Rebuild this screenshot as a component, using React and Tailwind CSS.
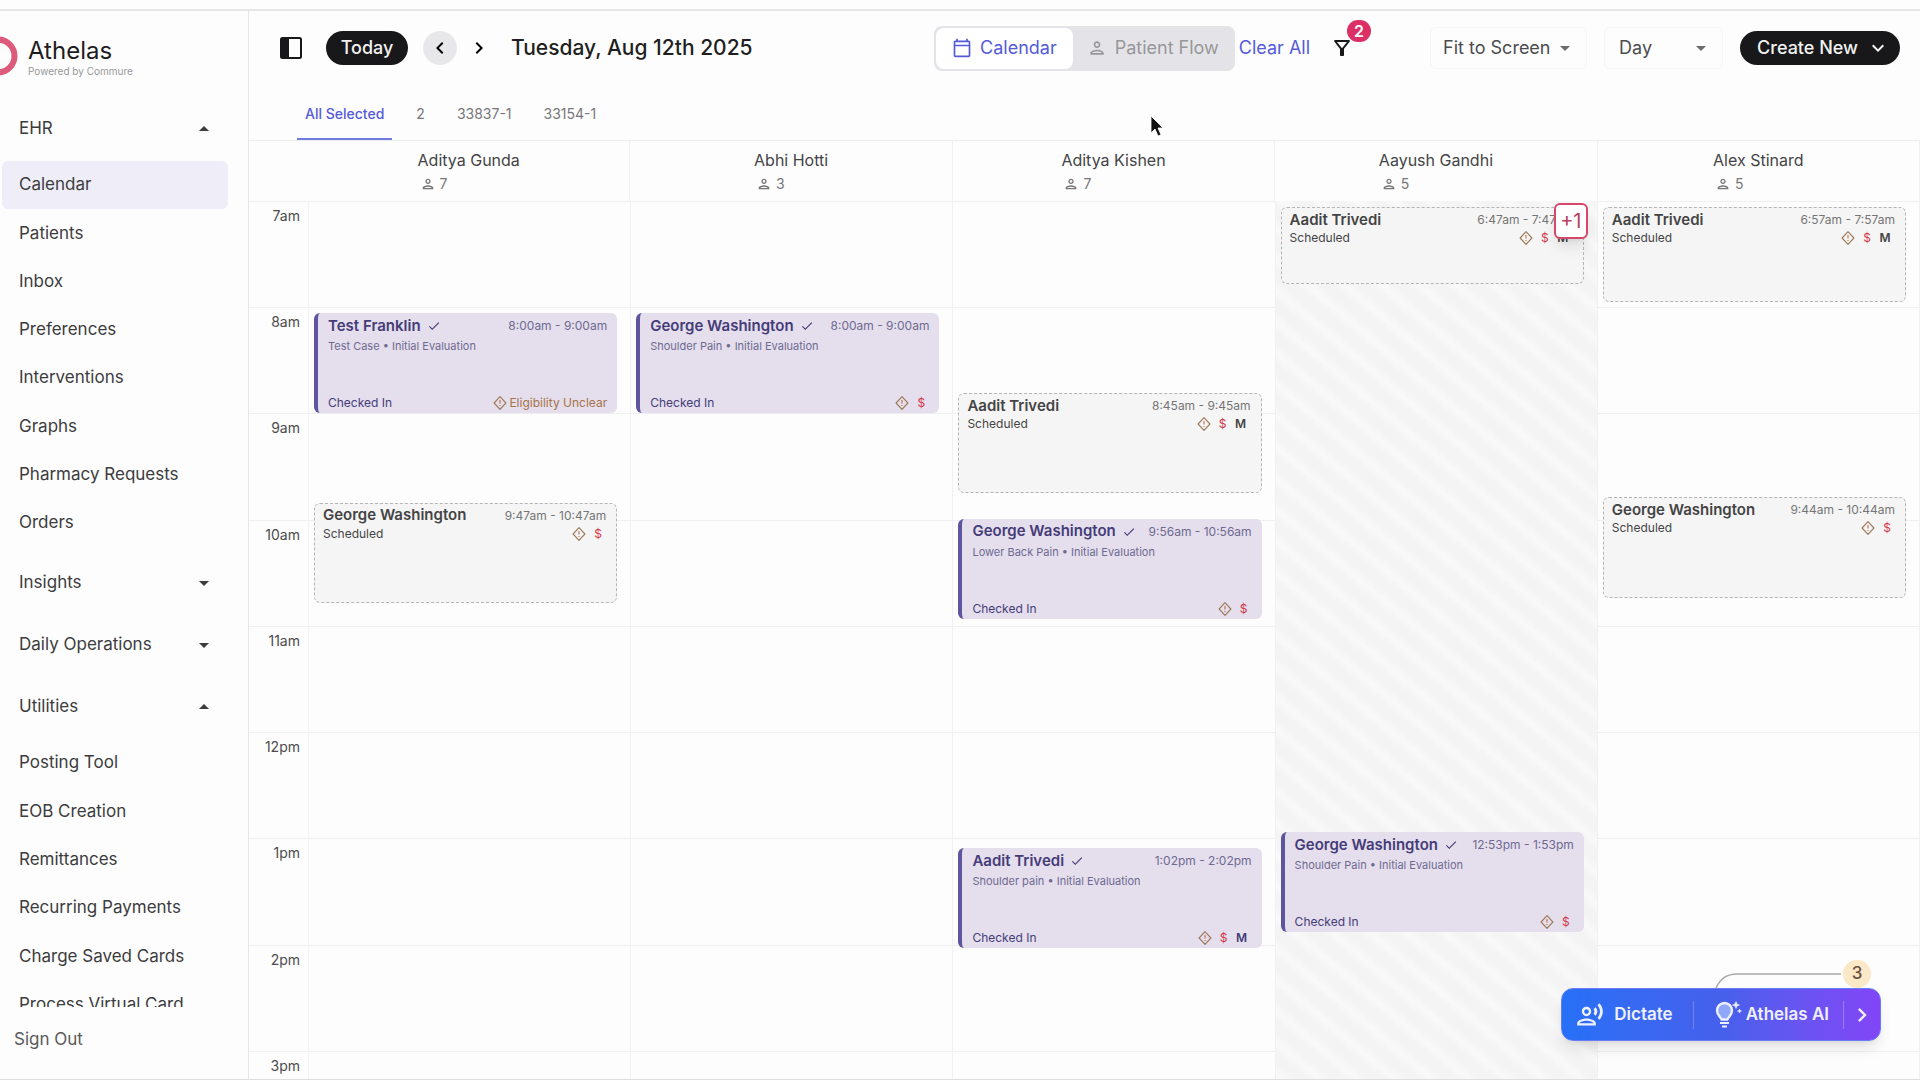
import {
  MdArrowDropDown,
  MdArrowDropUp,
  MdCheck,
  MdChevronLeft,
  MdChevronRight,
  MdKeyboardArrowDown,
  MdOutlineCalendarToday,
  MdOutlineFilterAlt,
  MdOutlinePerson,
  MdOutlineRecordVoiceOver,
} from 'react-icons/md'

const DAY_START = 7 * 60
const HOURS = ['7am', '8am', '9am', '10am', '11am', '12pm', '1pm', '2pm', '3pm']

const ehrLinks = ['Calendar', 'Patients', 'Inbox', 'Preferences', 'Interventions', 'Graphs', 'Pharmacy Requests', 'Orders']

const utilityLinks = [
  'Posting Tool',
  'EOB Creation',
  'Remittances',
  'Recurring Payments',
  'Charge Saved Cards',
  'Process Virtual Card',
]

const tabs = ['All Selected', '2', '33837-1', '33154-1']

// start and end are minutes after midnight
const providers = [
  {
    name: 'Aditya Gunda',
    count: 7,
    appointments: [
      { patient: 'Test Franklin', start: 480, end: 540, time: '8:00am - 9:00am', status: 'Checked In', reason: 'Test Case • Initial Evaluation', unclear: true },
      { patient: 'George Washington', start: 587, end: 647, time: '9:47am - 10:47am', status: 'Scheduled' },
    ],
  },
  {
    name: 'Abhi Hotti',
    count: 3,
    appointments: [
      { patient: 'George Washington', start: 480, end: 540, time: '8:00am - 9:00am', status: 'Checked In', reason: 'Shoulder Pain • Initial Evaluation' },
    ],
  },
  {
    name: 'Aditya Kishen',
    count: 7,
    appointments: [
      { patient: 'Aadit Trivedi', start: 525, end: 585, time: '8:45am - 9:45am', status: 'Scheduled', modified: true },
      { patient: 'George Washington', start: 596, end: 656, time: '9:56am - 10:56am', status: 'Checked In', reason: 'Lower Back Pain • Initial Evaluation' },
      { patient: 'Aadit Trivedi', start: 782, end: 842, time: '1:02pm - 2:02pm', status: 'Checked In', reason: 'Shoulder pain • Initial Evaluation', modified: true },
    ],
  },
  {
    name: 'Aayush Gandhi',
    count: 5,
    blocked: true,
    appointments: [
      { patient: 'Aadit Trivedi', start: 407, end: 467, time: '6:47am - 7:47am', status: 'Scheduled', modified: true, more: 1 },
      { patient: 'George Washington', start: 773, end: 833, time: '12:53pm - 1:53pm', status: 'Checked In', reason: 'Shoulder Pain • Initial Evaluation' },
    ],
  },
  {
    name: 'Alex Stinard',
    count: 5,
    appointments: [
      { patient: 'Aadit Trivedi', start: 417, end: 477, time: '6:57am - 7:57am', status: 'Scheduled', modified: true },
      { patient: 'George Washington', start: 584, end: 644, time: '9:44am - 10:44am', status: 'Scheduled' },
    ],
  },
]

function UnclearIcon() {
  return (
    <svg viewBox="0 0 14 14" className="size-3.5" fill="none" stroke="#9c7a58" strokeWidth="1.1" aria-hidden="true">
      <path d="M7 0.7 12.900 7 7 13.300 1.100 7z" strokeLinejoin="round" />
      <path d="M7 4v3.6M7 9v1" stroke="#c46a4a" />
    </svg>
  )
}

function Flags({ appointment }) {
  if (appointment.unclear) {
    return (
      <span className="flex items-center gap-0.5 text-xs text-[#a8744a]">
        <UnclearIcon />
        Eligibility Unclear
      </span>
    )
  }
  return (
    <span className="flex items-center gap-2 pr-1 text-xs">
      <UnclearIcon />
      <span className="w-2 text-center text-[#d33a4c]">$</span>
      {appointment.modified && <span className="w-3 text-center font-semibold">M</span>}
    </span>
  )
}

function Appointment({ appointment }) {
  const { patient, time, status, reason, more } = appointment
  const span = HOURS.length * 60
  const top = Math.max(appointment.start, DAY_START) - DAY_START
  const bottom = appointment.end - DAY_START
  const position = { top: `${(top / span) * 100}%`, height: `${((bottom - top) / span) * 100}%` }

  return (
    <div className="absolute right-[13px] left-[5px] pt-1.5" style={position}>
      {status === 'Checked In' ? (
        <article className="flex h-full flex-col rounded-md border-l-4 border-[#5d569f] bg-[#e4deed] pt-[3px] pr-2.5 pl-2.5 text-[#453c78]">
          <div className="flex h-5 items-center justify-between">
            <h3 className="flex items-center gap-1.5 text-[15px] font-semibold whitespace-nowrap">
              {patient}
              <MdCheck className="size-3.5" />
            </h3>
            <span className="text-xs whitespace-nowrap text-[#6f6a90]">{time}</span>
          </div>
          <p className="text-[11px] leading-5 text-[#6f6a90]">{reason}</p>
          <div className="mt-auto flex h-5 items-center justify-between text-xs">
            {status}
            <Flags appointment={appointment} />
          </div>
        </article>
      ) : (
        <article className="h-full rounded-md border border-dashed border-[#b5b5b5] bg-[#f5f5f6] pt-0.5 pr-2.5 pl-2 text-[#444]">
          <div className="flex h-5 items-center justify-between">
            <h3 className="text-[15px] font-semibold whitespace-nowrap">{patient}</h3>
            <span className="text-xs whitespace-nowrap text-[#757575]">{time}</span>
          </div>
          <div className="flex h-4 items-center justify-between text-xs">
            {status}
            <Flags appointment={appointment} />
          </div>
        </article>
      )}
      {more && (
        <button type="button" className="absolute top-0.5 -right-1 h-9 w-[34px] rounded-md border-2 border-[#d6476b] bg-white text-xl text-[#b8405f] shadow-lg">
          +{more}
        </button>
      )}
    </div>
  )
}

function SectionToggle({ label, open }) {
  return (
    <button type="button" className="flex h-12 w-full items-center justify-between pr-3 pl-[19px]" aria-expanded={open}>
      {label}
      {open ? <MdArrowDropUp className="size-6" /> : <MdArrowDropDown className="size-6" />}
    </button>
  )
}

function NavLinks({ links, active, className }) {
  return (
    <ul className={`grid auto-rows-fr ${className}`}>
      {links.map((link) => (
        <li key={link} className="pl-0.5">
          <a
            href="#"
            aria-current={link === active ? 'page' : undefined}
            className={`flex h-12 items-center rounded-md pl-[17px] ${link === active ? 'bg-[#eeedf8]' : ''}`}
          >
            {link}
          </a>
        </li>
      ))}
    </ul>
  )
}

function Sidebar() {
  return (
    <aside className="flex w-[249px] shrink-0 flex-col overflow-hidden border-r border-[#e6e6e8] pr-5 text-[17px] text-[#3c3c3e]">
      <div className="flex items-center gap-2.5 pt-6">
        <svg viewBox="0 0 18 40" className="h-10 w-[18px]" aria-hidden="true">
          <circle cx="-2" cy="20" r="16.5" fill="none" stroke="#dc5b7b" strokeWidth="6" />
        </svg>
        <div className="pt-0.5">
          <p className="text-2xl leading-7 text-[#1d1d1f]">Athelas</p>
          <p className="text-[10px] leading-3 text-[#98989a]">Powered by Commure</p>
        </div>
      </div>
      <nav className="mt-7 min-h-0 flex-1 overflow-hidden">
        <SectionToggle label="EHR" open />
        <NavLinks links={ehrLinks} active="Calendar" className="mt-2 h-[386px]" />
        <div className="mt-3 space-y-3.5">
          <SectionToggle label="Insights" />
          <SectionToggle label="Daily Operations" />
          <SectionToggle label="Utilities" open />
        </div>
        <NavLinks links={utilityLinks} className="mt-2 h-[290px]" />
      </nav>
      <a href="#" className="flex h-[72px] items-center pb-1.5 pl-3.5 text-[#5a5a5c]">Sign Out</a>
    </aside>
  )
}

function Toolbar() {
  return (
    <header className="flex h-[74px] items-center pr-5 pl-[31px] whitespace-nowrap">
      <button type="button" aria-label="Toggle sidebar">
        <svg viewBox="0 0 22 22" className="size-[22px]" aria-hidden="true">
          <rect x="1" y="1" width="20" height="20" rx="1.5" fill="none" stroke="#18181a" strokeWidth="2" />
          <path d="M1 1h8v20H1z" fill="#18181a" />
        </svg>
      </button>
      <button type="button" className="ml-6 h-[34px] w-[82px] rounded-full bg-[#18181a] text-lg font-medium text-[#f2f2f2]">Today</button>
      <button type="button" aria-label="Previous day" className="ml-[15px] flex size-[34px] items-center justify-center rounded-full bg-[#e8e8ea]">
        <MdChevronLeft className="size-6" />
      </button>
      <button type="button" aria-label="Next day" className="ml-2.5 flex size-6 items-center justify-center">
        <MdChevronRight className="size-6" />
      </button>
      <h1 className="ml-5 text-[21px] font-medium text-[#1f1f21]">Tuesday, Aug 12th 2025</h1>

      <div className="ml-auto flex items-center text-lg">
        <div className="flex h-[45px] rounded-lg border-2 border-[#e4e4e8] bg-[#e4e4e8]">
          <button type="button" className="flex items-center gap-2 rounded-lg bg-white px-4 text-[#555bd8]">
            <MdOutlineCalendarToday className="size-5" />
            Calendar
          </button>
          <button type="button" className="flex items-center gap-2 px-3.5 text-[#979799]">
            <MdOutlinePerson className="size-5" />
            Patient Flow
          </button>
        </div>
        <button type="button" className="ml-1 text-[#555bd8]">Clear All</button>
        <button type="button" aria-label="Filters" className="relative ml-5">
          <MdOutlineFilterAlt className="size-6 text-[#18181a]" />
          <span className="absolute -top-4 left-[17px] flex h-[22px] w-6 items-center justify-center rounded-full bg-[#dc2f66] text-base font-semibold text-white">2</span>
        </button>
      </div>

      <div className="ml-[76px] flex items-center gap-[17px] text-lg text-[#4c4c4e]">
        <div className="relative flex items-center">
          <select aria-label="Zoom" className="h-[42px] w-[157px] appearance-none rounded-md border border-[#f6f6f7] pl-3">
            <option>Fit to Screen</option>
          </select>
          <MdArrowDropDown className="pointer-events-none absolute right-2.5 size-6 text-[#6c6c6e]" />
        </div>
        <div className="relative flex items-center">
          <select aria-label="View" className="h-[42px] w-[119px] appearance-none rounded-md border border-[#f6f6f7] pl-3.5">
            <option>Day</option>
          </select>
          <MdArrowDropDown className="pointer-events-none absolute right-2.5 size-6 text-[#6c6c6e]" />
        </div>
        <button type="button" className="flex h-[34px] items-center gap-2 rounded-full bg-[#18181a] pr-2.5 pl-[17px] font-medium text-[#f2f2f2]">
          Create New
          <MdKeyboardArrowDown className="size-6" />
        </button>
      </div>
    </header>
  )
}

function AssistantBar() {
  return (
    <div className="absolute right-[39px] bottom-[38px] flex flex-col text-[17px] font-semibold text-[#eef0ff]">
      <div className="flex items-center justify-end pr-2.5">
        <svg viewBox="0 0 128 28" className="h-7 w-32" fill="none" stroke="#a9a9ab" strokeWidth="1.5" aria-hidden="true">
          <path d="M1 28C5 19 12 14 22 14H126" />
        </svg>
        <span className="flex size-7 items-center justify-center rounded-full bg-[#fbe8c6] font-medium text-[#6b4e3d]">3</span>
      </div>
      <div className="flex h-[53px] items-center rounded-xl border border-[#6b7bf5] bg-linear-to-r from-[#2670f7] via-[#4560ec] to-[#8245f7] shadow-lg">
        <button type="button" className="flex items-center gap-2.5 pl-3.5">
          <MdOutlineRecordVoiceOver className="size-7" />
          Dictate
        </button>
        <span className="ml-5 h-7 w-px bg-[#7a7cf2]" />
        <button type="button" className="ml-5 flex items-center gap-1">
          <svg viewBox="0 0 28 28" className="size-7" fill="none" stroke="currentColor" aria-hidden="true">
            <path d="M7.500 18.500h6c0-2 4.500-3.500 4.500-9a7.500 7.500 0 0 0-15 0c0 5.500 4.500 7 4.500 9z" fill="#8fa8f8" strokeWidth="2.400" strokeLinejoin="round" />
            <path d="M6 22h9M8 25.500h5" strokeWidth="2.200" />
            <path d="M22 0.500l1 2.500 2.500 1-2.500 1-1 2.500-1-2.500-2.500-1 2.500-1zM25.500 8l.6 1.400 1.400.6-1.400.6-.6 1.400-.6-1.400-1.400-.6 1.400-.6z" fill="currentColor" strokeWidth="0.600" />
          </svg>
          Athelas AI
        </button>
        <span className="ml-3.5 h-7 w-px bg-[#a07cf5]" />
        <button type="button" aria-label="Expand" className="px-1">
          <MdChevronRight className="size-7" />
        </button>
      </div>
    </div>
  )
}

export default function App() {
  return (
    <div className="flex h-screen flex-col overflow-hidden border-b border-[#dedee0] bg-[#fdfdfd] pt-[9px] font-['Inter',sans-serif]">
      <div className="flex min-h-0 flex-1 border-t-2 border-[#e6e6e8]">
        <Sidebar />
        <main className="relative flex min-w-0 flex-1 flex-col">
          <Toolbar />
          <div role="tablist" className="flex h-[56px] items-stretch gap-4 border-b border-[#ededef] pl-12 text-sm text-[#77777a]">
            {tabs.map((tab, i) => (
              <button
                key={tab}
                type="button"
                role="tab"
                aria-selected={i === 0}
                className={`border-b-2 px-2 pt-1 ${i === 0 ? 'border-[#6f7ce0] font-medium text-[#555bd8]' : 'border-transparent'}`}
              >
                {tab}
              </button>
            ))}
          </div>

          <div className="flex h-[60px] shrink-0 pl-[59px]">
            {providers.map((provider) => (
              <div key={provider.name} className="flex flex-1 justify-center border-r border-[#f1f1f3] pt-[9px]">
                <div>
                  <h2 className="text-base leading-5 text-[#444446]">{provider.name}</h2>
                  <p className="mt-1 flex items-center gap-1 pl-0.5 text-sm leading-5 text-[#77777a]">
                    <MdOutlinePerson className="size-4" />
                    {provider.count}
                  </p>
                </div>
              </div>
            ))}
          </div>

          <div className="min-h-0 flex-1 overflow-hidden">
            <div className="relative flex h-[956px]">
              <div className="absolute inset-0 grid grid-rows-9">
                {HOURS.map((hour) => (
                  <div key={hour} className="border-t border-[#efeff1] pt-1">
                    <span className="block w-[51px] text-right text-sm leading-5 text-[#4c4c4e]">{hour}</span>
                  </div>
                ))}
              </div>
              <div className="relative ml-[59px] flex flex-1 border-l border-[#f4f4f5]">
                {providers.map((provider) => (
                  <section
                    key={provider.name}
                    className={`relative flex-1 border-r border-[#f1f1f3] ${
                      provider.blocked ? 'bg-[repeating-linear-gradient(40deg,#f4f4f4_0px,#f4f4f4_8px,#f9f9f9_16px,#f4f4f4_24px)]' : ''
                    }`}
                  >
                    {provider.appointments.map((appointment) => (
                      <Appointment key={appointment.start} appointment={appointment} />
                    ))}
                  </section>
                ))}
              </div>
            </div>
          </div>
          <AssistantBar />
          <svg viewBox="0 0 14 22" className="absolute top-[104px] left-[901px] h-[22px] w-3.5" aria-hidden="true">
            <path d="M1 1v17l4-4 3 7 3-1.300-3-6.700h5z" fill="#111" stroke="#fff" strokeWidth="0.800" />
          </svg>
        </main>
      </div>
    </div>
  )
}
